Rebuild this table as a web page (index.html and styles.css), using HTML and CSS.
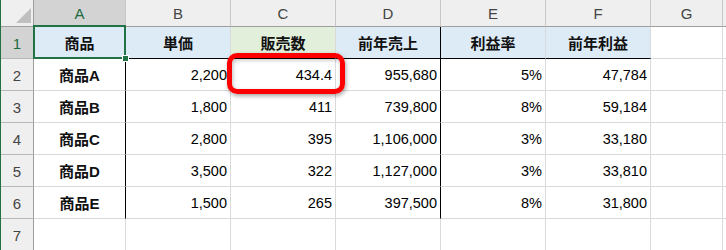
FILE: index.html
```html
<!DOCTYPE html>
<html lang="ja">
<head>
<meta charset="utf-8">
<link rel="stylesheet" href="styles.css">
</head>
<body>
<div class="sheet">
  <div class="grid">
    <div class="corner"><svg width="17" height="17" viewBox="0 0 17 17"><polygon points="16,1 16,16 1,16" fill="#bfbfbf"/></svg></div>
    <div class="colh sel">A</div>
    <div class="colh">B</div>
    <div class="colh">C</div>
    <div class="colh">D</div>
    <div class="colh">E</div>
    <div class="colh">F</div>
    <div class="colh">G</div>
    <div class="colh last"></div>

    <div class="rowh sel">1</div>
    <div class="c hd">商品</div>
    <div class="c hd bb">単価</div>
    <div class="c hd bb green">販売数</div>
    <div class="c hd bb br">前年売上</div>
    <div class="c hd bb">利益率</div>
    <div class="c hd bb">前年利益</div>
    <div class="c"></div>
    <div class="c last"></div>

    <div class="rowh">2</div>
    <div class="c name br">商品A</div>
    <div class="c num">2,200</div>
    <div class="c num">434.4</div>
    <div class="c num br">955,680</div>
    <div class="c num">5%</div>
    <div class="c num">47,784</div>
    <div class="c"></div>
    <div class="c last"></div>

    <div class="rowh">3</div>
    <div class="c name br">商品B</div>
    <div class="c num">1,800</div>
    <div class="c num">411</div>
    <div class="c num br">739,800</div>
    <div class="c num">8%</div>
    <div class="c num">59,184</div>
    <div class="c"></div>
    <div class="c last"></div>

    <div class="rowh">4</div>
    <div class="c name br">商品C</div>
    <div class="c num">2,800</div>
    <div class="c num">395</div>
    <div class="c num br">1,106,000</div>
    <div class="c num">3%</div>
    <div class="c num">33,180</div>
    <div class="c"></div>
    <div class="c last"></div>

    <div class="rowh">5</div>
    <div class="c name br">商品D</div>
    <div class="c num">3,500</div>
    <div class="c num">322</div>
    <div class="c num br">1,127,000</div>
    <div class="c num">3%</div>
    <div class="c num">33,810</div>
    <div class="c"></div>
    <div class="c last"></div>

    <div class="rowh">6</div>
    <div class="c name br">商品E</div>
    <div class="c num">1,500</div>
    <div class="c num">265</div>
    <div class="c num br">397,500</div>
    <div class="c num">8%</div>
    <div class="c num">31,800</div>
    <div class="c"></div>
    <div class="c last"></div>

    <div class="rowh">7</div>
    <div class="c"></div>
    <div class="c"></div>
    <div class="c"></div>
    <div class="c"></div>
    <div class="c"></div>
    <div class="c"></div>
    <div class="c"></div>
    <div class="c last"></div>
  </div>
  <div class="selection"></div>
  <div class="handle"></div>
  <div class="highlight"></div>
</div>
</body>
</html>
```

FILE: styles.css
```css
html, body {
  margin: 0;
  padding: 0;
  background: #ffffff;
}
.sheet {
  position: relative;
  width: 726px;
  height: 250px;
  overflow: hidden;
  border-left: 1px solid #217346;
  box-sizing: border-box;
  font-family: "Liberation Sans", "Noto Sans CJK JP", sans-serif;
}
.grid {
  display: grid;
  grid-template-columns: 33px 92px 105px 105px 105px 105px 105px 72px 1fr;
  grid-template-rows: 27px repeat(7, 32px);
}
.grid > div {
  box-sizing: border-box;
  display: flex;
  align-items: center;
}
.corner {
  background: #efefef;
  border-right: 1px solid #9e9e9e;
  border-bottom: 1px solid #9e9e9e;
  justify-content: flex-end;
  align-items: flex-end !important;
  padding: 0 1px 2px 0;
}
.corner svg { display: block; }
.colh {
  background: #efefef;
  border-right: 1px solid #c8c8c8;
  border-bottom: 1px solid #9e9e9e;
  justify-content: center;
  font-size: 15px;
  color: #444444;
  padding-top: 1px;
}
.colh.sel, .rowh.sel {
  background: #d3d3d3;
  color: #1e6b41;
}
.rowh {
  background: #efefef;
  border-right: 1px solid #9e9e9e;
  border-bottom: 1px solid #b8b8b8;
  justify-content: center;
  font-size: 15px;
  color: #444444;
  padding-top: 2px;
}
.c {
  border-right: 1px solid #dadada;
  border-bottom: 1px solid #dadada;
  font-size: 14.5px;
  color: #000000;
}
.c.last, .colh.last { border-right: none; }
.hd {
  background: #ddebf7;
  justify-content: center;
  font-weight: bold;
  font-size: 15px;
  font-family: "Noto Sans CJK JP", sans-serif;
  color: #111111;
}
.hd.green { background: #e2efda; }
.bb { border-bottom: 1px solid #000000 !important; }
.br { border-right: 1px solid #000000 !important; }
.name {
  justify-content: center;
  font-weight: bold;
  font-size: 15px;
  font-family: "Liberation Sans", "Noto Sans CJK JP", sans-serif;
  color: #111111;
}
.num {
  justify-content: flex-end;
  padding-right: 3px;
  padding-top: 1px;
}
.selection {
  position: absolute;
  left: 32px;
  top: 25px;
  width: 93px;
  height: 34px;
  border: 2px solid #217346;
  box-sizing: border-box;
}
.handle {
  position: absolute;
  left: 121px;
  top: 55px;
  width: 5px;
  height: 5px;
  background: #217346;
  border: 1px solid #ffffff;
}
.highlight {
  position: absolute;
  left: 226px;
  top: 53px;
  width: 118px;
  height: 41px;
  box-sizing: border-box;
  border: 5px solid #ff0000;
  border-radius: 10px;
  box-shadow: 1px 2px 4px rgba(0, 0, 0, 0.35), inset 1px 2px 4px rgba(0, 0, 0, 0.25);
}
```
